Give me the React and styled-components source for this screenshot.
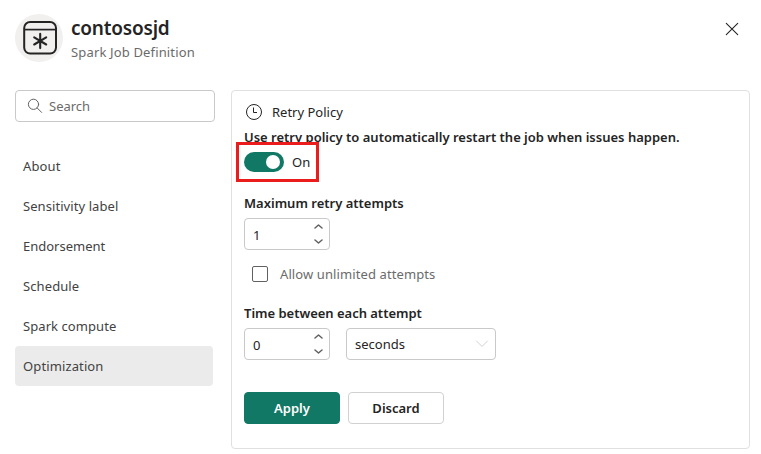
import React from 'react';
import styled, { createGlobalStyle } from 'styled-components';

const GlobalStyle = createGlobalStyle`
  *, *::before, *::after { box-sizing: border-box; }
  body {
    margin: 0;
    background: #fff;
    color: #242424;
    font: 400 13px/20px "Noto Sans", "Open Sans", sans-serif;
  }
  button, input { font: inherit; color: inherit; }
`;

const Page = styled.div`
  height: 454px;
  padding: 14px 11px 5px 15px;
  display: flex;
  flex-direction: column;
  overflow: hidden;
`;

const Header = styled.header`
  height: 48px;
  display: flex;
  align-items: center;
  gap: 8px;
`;

const Avatar = styled.div`
  width: 48px;
  height: 48px;
  padding-left: 2px;
  border-radius: 50%;
  background: #f1f0ef;
  display: flex;
  align-items: center;
  justify-content: center;
`;

const Heading = styled.div`
  flex: 1;
`;

const Title = styled.h1`
  margin: 0;
  font-size: 19px;
  line-height: 28px;
  font-weight: 600;
  letter-spacing: -0.2px;
`;

const Subtitle = styled.div`
  color: #6b6b6b;
  line-height: 20px;
  letter-spacing: 0.15px;
`;

const CloseButton = styled.button`
  width: 36px;
  height: 36px;
  margin-top: -18px;
  padding: 0;
  border: 0;
  background: none;
  display: flex;
  align-items: center;
  justify-content: center;
`;

const Body = styled.div`
  margin-top: 28px;
  flex: 1;
  display: flex;
  gap: 16px;
`;

const Sidebar = styled.aside`
  width: 200px;
`;

const SearchBox = styled.label`
  height: 32px;
  padding: 0 11px;
  border: 1px solid #c9c9c9;
  border-radius: 4px;
  display: flex;
  align-items: center;
  gap: 6px;
  color: #6b6b6b;
`;

const Nav = styled.nav`
  width: 198px;
  margin-top: 24px;
  display: flex;
  flex-direction: column;
`;

const NavItem = styled.a`
  height: 40px;
  padding: 0 8px;
  border-radius: 4px;
  display: flex;
  align-items: center;
  color: #424242;
  background: ${(p) => (p.$active ? '#ebebeb' : 'transparent')};
  letter-spacing: ${(p) => p.$tracking || 0}px;
`;

const Panel = styled.main`
  height: 359px;
  flex: 1;
  padding: 9px 12px;
  border: 1px solid #e0e0e0;
  border-radius: 4px;
`;

const PanelTitle = styled.div`
  height: 24px;
  display: flex;
  align-items: center;
  gap: 10px;
  padding-left: 2px;
`;

const FieldLabel = styled.div`
  margin-top: ${(p) => p.$gap}px;
  height: 20px;
  font-weight: 600;
  letter-spacing: ${(p) => p.$tracking || 0}px;
  white-space: nowrap;
`;

const SwitchRow = styled.div`
  position: relative;
  width: max-content;
  height: 20px;
  margin-top: 5px;
  display: flex;
  align-items: center;
  gap: 8px;
`;

const Switch = styled.span`
  width: 40px;
  height: 20px;
  padding: 3px 4px;
  border-radius: 10px;
  background: #117865;
  display: flex;
  justify-content: flex-end;
`;

const Thumb = styled.span`
  width: 14px;
  height: 14px;
  border-radius: 50%;
  background: #fff;
`;

const Highlight = styled.span`
  position: absolute;
  left: -8px;
  top: -10px;
  width: 83px;
  height: 40px;
  border: 3px solid #ea1c1c;
  pointer-events: none;
`;

const Fields = styled.div`
  margin-top: 5px;
  display: flex;
  gap: 16px;
`;

const SpinBox = styled.div`
  width: 86px;
  height: 32px;
  padding: 2px 6px 0 8px;
  border: 1px solid #c9c9c9;
  border-radius: 4px;
  display: flex;
  align-items: center;
  justify-content: space-between;
`;

const SpinArrows = styled.svg`
  margin-top: -2px;
`;

const Select = styled.div`
  width: 150px;
  height: 32px;
  padding: 0 6px 0 8px;
  border: 1px solid #c9c9c9;
  border-radius: 4px;
  display: flex;
  align-items: center;
  justify-content: space-between;
`;

const CheckRow = styled.div`
  margin: 16px 0 0 8px;
  height: 16px;
  display: flex;
  align-items: center;
  gap: 12px;
  color: #6b6b6b;
  letter-spacing: 0.1px;
`;

const Checkbox = styled.span`
  width: 16px;
  height: 16px;
  border: 1px solid #616161;
  border-radius: 2px;
`;

const Actions = styled.div`
  margin-top: 32px;
  display: flex;
  gap: 8px;
`;

const Button = styled.button`
  width: 96px;
  height: 32px;
  padding: 0;
  border: 1px solid ${(p) => (p.$primary ? '#117865' : '#d1d1d1')};
  border-radius: 4px;
  background: ${(p) => (p.$primary ? '#117865' : '#fff')};
  color: ${(p) => (p.$primary ? '#fff' : '#242424')};
  font-weight: 600;
`;

function JobIcon() {
  return (
    <svg width="36" height="36" viewBox="0 0 36 36" fill="none" stroke="#242424">
      <rect x="2.2" y="2" width="31.8" height="31.6" rx="6" strokeWidth="2" />
      <path d="M2.5 9.6h31.5" strokeWidth="1.7" />
      <path d="M18.2 13.9v14.2M12.2 17.3l12 7.2M24.2 17.3l-12 7.2" strokeWidth="2.1" strokeLinecap="round" />
    </svg>
  );
}

function CloseIcon() {
  return (
    <svg width="14" height="14" viewBox="0 0 14 14" fill="none" stroke="#242424" strokeWidth="1.1" strokeLinecap="round">
      <path d="M1.3 1.3l11.4 11.4M12.7 1.3L1.3 12.7" />
    </svg>
  );
}

function SearchIcon() {
  return (
    <svg width="16" height="16" viewBox="0 0 16 16" fill="none" stroke="#616161" strokeLinecap="round">
      <circle cx="6.5" cy="6.3" r="5.1" />
      <path d="M10.2 10l4.4 4.4" />
    </svg>
  );
}

function ClockIcon() {
  return (
    <svg width="16" height="16" viewBox="0 0 16 16" fill="none" stroke="#242424">
      <circle cx="8" cy="8" r="7.5" />
      <path d="M7.5 3.5v5h3.5" />
    </svg>
  );
}

function Arrows() {
  return (
    <SpinArrows width="10" height="22" viewBox="0 0 10 22" fill="none" stroke="#616161" strokeWidth="1.5" strokeLinecap="round" strokeLinejoin="round">
      <path d="M2 5L5.5 2L9 5M2 17L5.5 20L9 17" />
    </SpinArrows>
  );
}

function ChevronDown() {
  return (
    <svg width="14" height="8" viewBox="0 0 14 8" fill="none" stroke="#d1d1d1" strokeLinecap="round" strokeLinejoin="round">
      <path d="M1.5 1L7 6.5L12.5 1" />
    </svg>
  );
}

const sections = [
  { name: 'About', tracking: 0.15 },
  { name: 'Sensitivity label', tracking: 0.07 },
  { name: 'Endorsement', tracking: 0 },
  { name: 'Schedule', tracking: 0.1 },
  { name: 'Spark compute', tracking: 0.07 },
  { name: 'Optimization', tracking: 0.12 },
];

export default function App() {
  return (
    <Page>
      <GlobalStyle />
      <Header>
        <Avatar><JobIcon /></Avatar>
        <Heading>
          <Title>contososjd</Title>
          <Subtitle>Spark Job Definition</Subtitle>
        </Heading>
        <CloseButton aria-label="Close"><CloseIcon /></CloseButton>
      </Header>
      <Body>
        <Sidebar>
          <SearchBox><SearchIcon />Search</SearchBox>
          <Nav>
            {sections.map((s) => (
              <NavItem key={s.name} $active={s.name === 'Optimization'} $tracking={s.tracking}>{s.name}</NavItem>
            ))}
          </Nav>
        </Sidebar>
        <Panel>
          <PanelTitle><ClockIcon />Retry Policy</PanelTitle>
          <FieldLabel $gap={3}>Use retry policy to automatically restart the job when issues happen.</FieldLabel>
          <SwitchRow>
            <Switch role="switch" aria-checked="true"><Thumb /></Switch>
            On
            <Highlight />
          </SwitchRow>
          <FieldLabel $gap={21}>Maximum retry attempts</FieldLabel>
          <Fields><SpinBox>1<Arrows /></SpinBox></Fields>
          <CheckRow><Checkbox role="checkbox" aria-checked="false" />Allow unlimited attempts</CheckRow>
          <FieldLabel $gap={21} $tracking={-0.02}>Time between each attempt</FieldLabel>
          <Fields>
            <SpinBox>0<Arrows /></SpinBox>
            <Select>seconds<ChevronDown /></Select>
          </Fields>
          <Actions>
            <Button $primary>Apply</Button>
            <Button>Discard</Button>
          </Actions>
        </Panel>
      </Body>
    </Page>
  );
}
